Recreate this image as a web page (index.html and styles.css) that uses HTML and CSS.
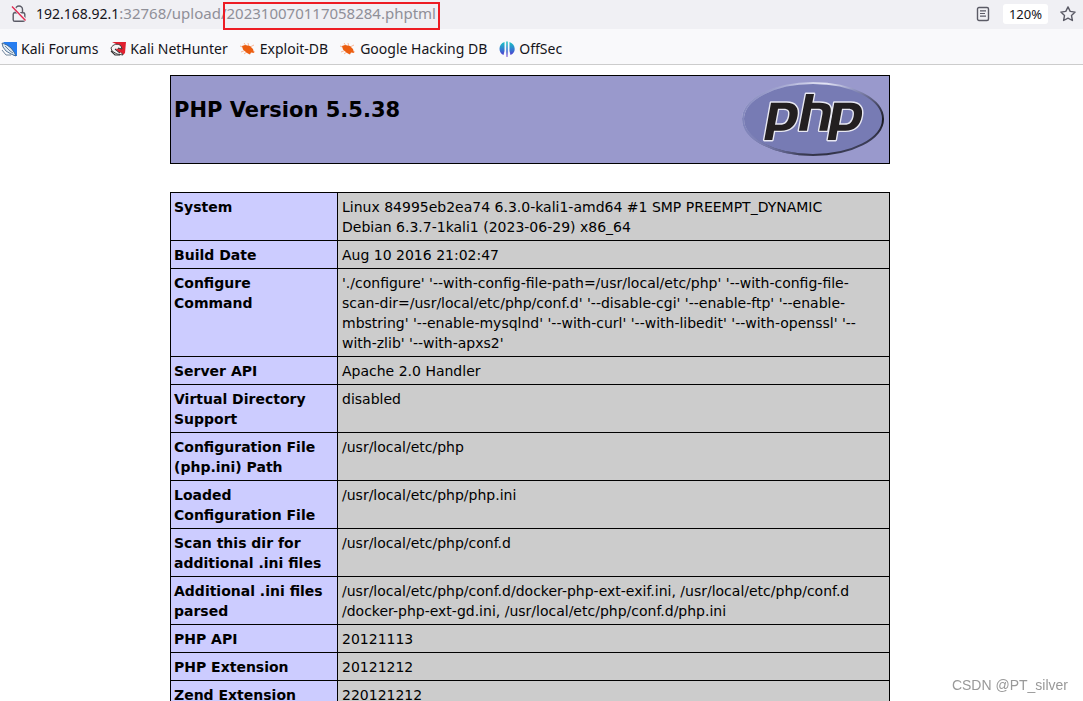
FILE: index.html
```html
<!DOCTYPE html>
<html lang="en">
<head>
<meta charset="utf-8">
<title>phpinfo()</title>
<link rel="stylesheet" href="styles.css">
</head>
<body>
<header class="browser">
  <div class="urlbar">
    <svg class="lock" viewBox="0 0 16 18" width="16" height="18" fill="none" stroke="#5b5b66" stroke-width="1.4">
      <path d="M4.5 7.500V4.500a3.500 3.500 0 0 1 7 0v3"/><rect x="2.200" y="7.700" width="11.600" height="8.600" rx="1.600"/>
      <path d="M1.500 1.500l13.500 14" stroke="#f0f0f4" stroke-width="3"/><path d="M1 1.500l13.500 14" stroke="#e22850"/>
    </svg>
    <div class="url"><span class="host">192.168.92.1</span>:32768/upload/<span class="file">202310070117058284.phptml</span></div>
    <button class="tool" type="button" aria-label="Reader view">
      <svg viewBox="0 0 14 16" width="14" height="16" fill="none" stroke="#5b5b66" stroke-width="1.400"><rect x="1.500" y="1.500" width="11" height="13" rx="1.500"/><path d="M4 4.800h6M4 7.500h5M4 10.200h6" stroke-width="1.200"/></svg>
    </button>
    <button class="zoom" type="button">120%</button>
    <button class="tool" type="button" aria-label="Bookmark this page">
      <svg viewBox="0 0 16 16" width="16" height="16" fill="none" stroke="#5b5b66" stroke-width="1.400" stroke-linejoin="round"><path d="M8 .9l2.200 4.500 4.900.7-3.600 3.500.9 4.900L8 12.200l-4.400 2.300.9-4.900L.9 6.100l4.900-.7z"/></svg>
    </button>
  </div>
  <nav class="bookmarks">
    <a href="#"><svg viewBox="0 0 16 16" width="16" height="16"><path d="M2 1h14v14h-3z" fill="#267df0"/><path d="M1 2l5 2 4 3 3 4 2 4-5-2-5-3-3-4z" fill="#dfeaf4" stroke="#31577d" stroke-width=".8"/><path d="M4 5l5 5 3 2M1 9l4 5h5" fill="none" stroke="#4f6a85" stroke-width=".8"/></svg>Kali Forums</a>
    <a href="#"><svg viewBox="0 0 16 16" width="16" height="16"><path d="M2 1h14l-1 11-2 2L6 3z" fill="#e0202f"/><path d="M1 7c2-4 7-5 10-2l1 3-4-1 5 7-6-1-5-3z" fill="#f7f3f3" stroke="#333" stroke-width=".9"/><path d="M5 8l5 4M1 10l4 4h5" fill="none" stroke="#333" stroke-width="1.100"/><path d="M6 8c2-1 4 0 7 4l-4-1z" fill="#e0202f"/></svg>Kali NetHunter</a>
    <a href="#"><svg viewBox="0 0 16 16" width="16" height="16"><g fill="none" stroke="#f6b08c" stroke-width=".9"><path d="M0 5l5 2M4 2l3 4M8 2l1 4M1 11l5-2M4 13l4-3M10 6l4-2M11 10l4 1"/></g><path d="M2 5l3-1 5 1 3 3 1 4-3-.5-1 2-3-1.500-4-3.500z" fill="#ec5e10"/></svg>Exploit-DB</a>
    <a href="#"><svg viewBox="0 0 16 16" width="16" height="16"><g fill="none" stroke="#f6b08c" stroke-width=".9"><path d="M0 5l5 2M4 2l3 4M8 2l1 4M1 11l5-2M4 13l4-3M10 6l4-2M11 10l4 1"/></g><path d="M2 5l3-1 5 1 3 3 1 4-3-.5-1 2-3-1.500-4-3.500z" fill="#ec5e10"/></svg>Google Hacking DB</a>
    <a href="#"><svg viewBox="0 0 16 16" width="16" height="16"><defs><linearGradient id="os" x1="0" y1="0" x2="0" y2="16" gradientUnits="userSpaceOnUse"><stop offset=".1" stop-color="#1bbfc5"/><stop offset=".55" stop-color="#3578d2"/><stop offset="1" stop-color="#5d24cf"/></linearGradient></defs><path d="M5.500 1v9l-1 4C-1 12-1 3 5.500 1zM10.500 1v9l1 4c6-2 5.500-11-1-13z" fill="url(#os)"/><path d="M7 .5h2V11l-.5 5h-1L7 11z" fill="url(#os)" opacity=".75"/></svg>OffSec</a>
  </nav>
</header>
<main>
  <div class="page">
  <div class="banner">
    <h1>PHP Version 5.5.38</h1>
    <svg class="logo" viewBox="0 0 144 79" width="144" height="79" role="img" aria-label="PHP">
      <defs><linearGradient id="rim" x1="0.100" y1="0" x2="0.900" y2="1"><stop offset="0" stop-color="#8589c0"/><stop offset=".24" stop-color="#e4e5f5"/><stop offset=".4" stop-color="#8c90bd"/><stop offset=".62" stop-color="#41425b"/><stop offset=".76" stop-color="#17171f"/><stop offset="1" stop-color="#5c5f88"/></linearGradient><linearGradient id="side" x1="0" x2="1" y1="0.600" y2="0.400"><stop offset="0" stop-color="#7f83ba"/><stop offset=".5" stop-color="#7f83ba" stop-opacity="0"/></linearGradient></defs>
      <ellipse cx="72" cy="39" rx="70" ry="36" fill="#777bb4" stroke="url(#rim)" stroke-width="2"/>
      <ellipse cx="72" cy="39" rx="70" ry="36" fill="none" stroke="url(#side)" stroke-width="2"/>
      <g fill="#231f20" fill-rule="evenodd" stroke="#e8e8f2" stroke-width="2.800" stroke-linejoin="round" paint-order="stroke">
        <path d="M30 22.700h15.500c9 0 12.500 5.300 11 13.300-1.700 10-7.500 14.700-16.500 14.700h-7L31.300 60h-8zM37 28.700l-3 16h5c5.500 0 8-2.500 9.200-8.500 1.100-5.500-.7-7.500-5.700-7.500z"/>
        <path d="M93.300 22.700h16.500c9 0 12.500 5.300 11 13.300-1.700 10-7.500 14.700-16.500 14.700h-8L94.700 60h-8zM101 28.700l-3 16h5.500c5.500 0 8-2.500 9.200-8.500 1.100-5.500-.7-7.500-5.700-7.500z"/>
        <path d="M65 14h8l-1.700 8.700h7.200c9.500 0 12.500 3.300 11 11l-3.300 17h-8l3.100-16c.9-4.600-.2-6-4.700-6h-6.500l-4.200 22h-8z"/>
      </g>
    </svg>
  </div>
  <table class="info">
    <colgroup><col class="name"><col></colgroup>
    <tbody>
    <tr><th scope="row">System</th><td>Linux 84995eb2ea74 6.3.0-kali1-amd64 #1 SMP PREEMPT_DYNAMIC<br>Debian 6.3.7-1kali1 (2023-06-29) x86_64</td></tr>
    <tr><th scope="row">Build Date</th><td>Aug 10 2016 21:02:47</td></tr>
    <tr><th scope="row">Configure Command</th><td>'./configure' '--with-config-file-path=/usr/local/etc/php' '--with-config-file-<br>scan-dir=/usr/local/etc/php/conf.d' '--disable-cgi' '--enable-ftp' '--enable-<br>mbstring' '--enable-mysqlnd' '--with-curl' '--with-libedit' '--with-openssl' '--<br>with-zlib' '--with-apxs2'</td></tr>
    <tr><th scope="row">Server API</th><td>Apache 2.0 Handler</td></tr>
    <tr><th scope="row">Virtual Directory Support</th><td>disabled</td></tr>
    <tr><th scope="row">Configuration File (php.ini) Path</th><td>/usr/local/etc/php</td></tr>
    <tr><th scope="row">Loaded Configuration File</th><td>/usr/local/etc/php/php.ini</td></tr>
    <tr><th scope="row">Scan this dir for additional .ini files</th><td>/usr/local/etc/php/conf.d</td></tr>
    <tr><th scope="row">Additional .ini files parsed</th><td>/usr/local/etc/php/conf.d/docker-php-ext-exif.ini, /usr/local/etc/php/conf.d<br>/docker-php-ext-gd.ini, /usr/local/etc/php/conf.d/php.ini</td></tr>
    <tr><th scope="row">PHP API</th><td>20121113</td></tr>
    <tr><th scope="row">PHP Extension</th><td>20121212</td></tr>
    <tr><th scope="row">Zend Extension</th><td>220121212</td></tr>
    </tbody>
  </table>
  </div>
</main>
<div class="watermark">CSDN @PT_silver</div>
</body>
</html>
```
FILE: styles.css
```css
* { box-sizing: border-box; }
html { overflow: hidden; }
body {
  margin: 0;
  background: #fff;
  color: #000;
  font-family: "DejaVu Sans", sans-serif;
  font-size: 14px;
}
svg { display: block; flex: none; }

.browser {
  font-family: "Noto Sans", sans-serif;
  background: #f9f9fb;
  border-bottom: 1px solid #ccc;
}
.urlbar {
  display: flex;
  align-items: center;
  height: 29px;
  padding: 0 7px 2px 11px;
  background: #f0f0f4;
  color: #8f8f98;
}
.url { flex: 1; margin-left: 9px; font-size: 15px; line-height: 20px; white-space: nowrap; }
.host { color: #15141a; font-size: 14px; }
.file { position: relative; }
.file::after {
  content: "";
  position: absolute;
  inset: -1px -4px -7px -4px;
  border: 2px solid #ed1c24;
}
.tool { padding: 0; border: 0; background: none; }
.zoom {
  margin: 0 12px 0 13px;
  padding: 0 6px;
  height: 20px;
  border: 0;
  border-radius: 3px;
  background: #fff;
  color: #15141a;
  font: 13px/20px "Noto Sans", sans-serif;
}
.bookmarks {
  display: flex;
  align-items: center;
  gap: 12px;
  height: 35px;
  padding: 4px 1px 0;
}
.bookmarks a {
  display: flex;
  align-items: center;
  gap: 4px;
  color: #15141a;
  font-size: 14px;
  line-height: 20px;
  text-decoration: none;
  white-space: nowrap;
}

main { padding: 10px 23px 0 0; }
.page { max-width: 720px; margin: 0 auto; }
.banner {
  display: flex;
  align-items: flex-start;
  justify-content: space-between;
  padding: 4px 4px 4px 3px;
  border: 1px solid #000;
  background: #9999cc;
}
.banner h1 { margin: 17px 0 0; font-size: 21px; line-height: 26px; }
.info {
  width: 100%;
  margin-top: 28px;
  border-collapse: collapse;
  table-layout: fixed;
  line-height: 20px;
}
.name { width: 167px; }
.info th, .info td {
  padding: 4px 4px 3px;
  border: 1px solid #000;
  text-align: left;
  vertical-align: top;
}
.info th { padding-left: 3px; padding-right: 8px; background: #ccccff; }
.info td { background: #cccccc; }
.watermark {
  position: fixed;
  right: 15px;
  bottom: 7px;
  color: #999;
  font: 14px/18px "Liberation Sans", sans-serif;
}
```
